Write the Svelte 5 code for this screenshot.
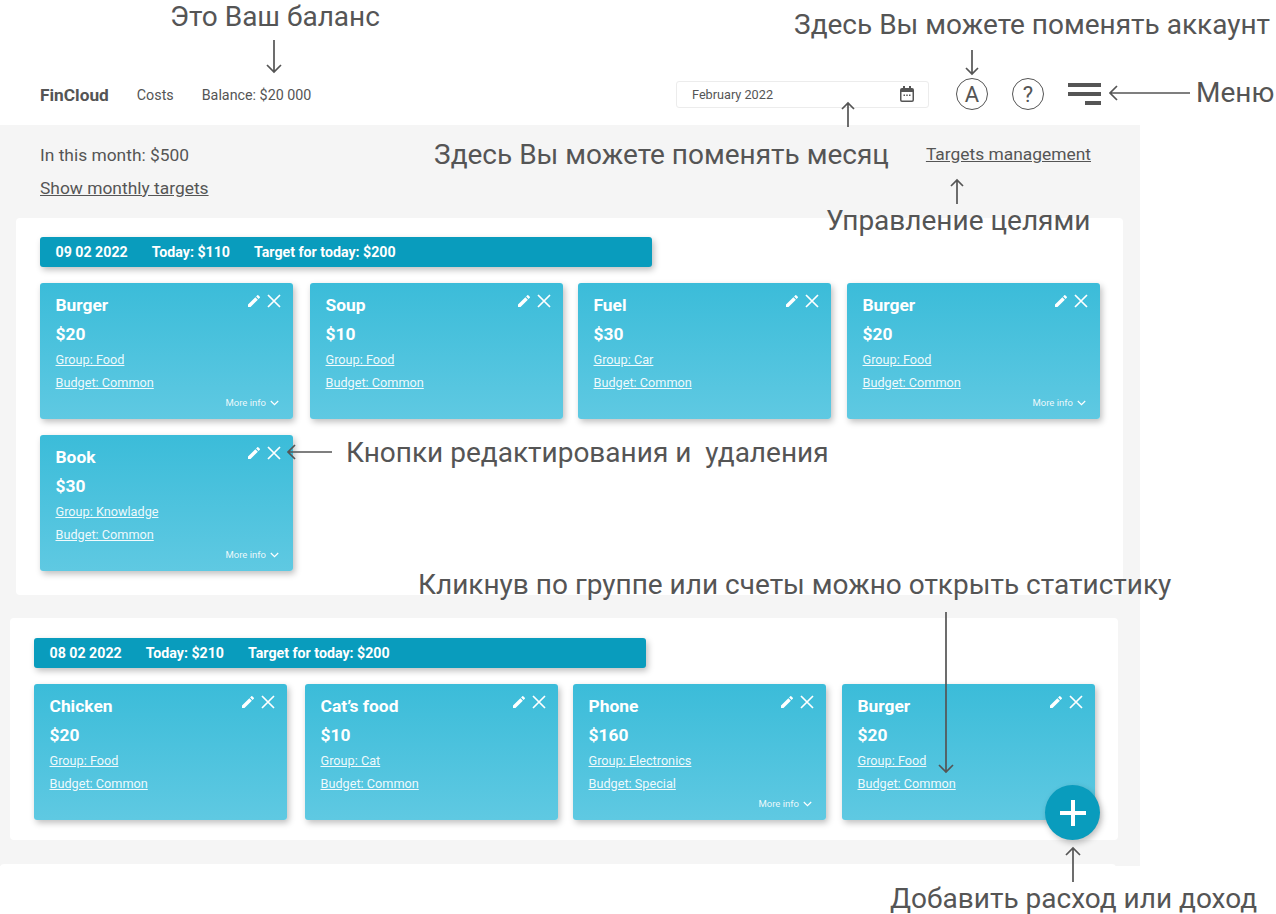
<script>
  const days = [
    {
      date: '09 02 2022', today: '$110', target: '$200', cls: 'first',
      items: [
        { name: 'Burger', price: '$20', group: 'Food', budget: 'Common', more: true },
        { name: 'Soup', price: '$10', group: 'Food', budget: 'Common' },
        { name: 'Fuel', price: '$30', group: 'Car', budget: 'Common' },
        { name: 'Burger', price: '$20', group: 'Food', budget: 'Common', more: true },
        { name: 'Book', price: '$30', group: 'Knowladge', budget: 'Common', more: true }
      ]
    },
    {
      date: '08 02 2022', today: '$210', target: '$200', cls: 'second',
      items: [
        { name: 'Chicken', price: '$20', group: 'Food', budget: 'Common' },
        { name: 'Cat’s food', price: '$10', group: 'Cat', budget: 'Common' },
        { name: 'Phone', price: '$160', group: 'Electronics', budget: 'Special', more: true },
        { name: 'Burger', price: '$20', group: 'Food', budget: 'Common' }
      ]
    }
  ];

  // help overlay drawn over the screen
  const notes = [
    { text: 'Это Ваш баланс', x: 170, y: 17 },
    { text: 'Здесь Вы можете поменять аккаунт', x: 794, y: 25 },
    { text: 'Меню', x: 1196, y: 93 },
    { text: 'Здесь Вы можете поменять месяц', x: 434, y: 155 },
    { text: 'Управление целями', x: 826, y: 221 },
    { text: 'Кнопки редактирования и  удаления', x: 346, y: 453 },
    { text: 'Кликнув по группе или счеты можно открыть статистику', x: 418, y: 585 },
    { text: 'Добавить расход или доход', x: 890, y: 899 }
  ];
</script>

<div class="page">
  <header class="topbar">
    <span class="logo">FinCloud</span>
    <span class="nav">Costs</span>
    <span class="nav">Balance: $20 000</span>
    <div class="tools">
      <div class="month">
        <span>February 2022</span>
        <svg width="14" height="16" viewBox="0 0 14 16">
          <path fill="#555" d="M2 2h1V0h2v2h4V0h2v2h1a2 2 0 0 1 2 2v10a2 2 0 0 1-2 2H2a2 2 0 0 1-2-2V4a2 2 0 0 1 2-2zM1.500 6v8c0 .3.2.5.5.5h10c.3 0 .5-.2.5-.5V6z"/>
          <path fill="#555" d="M3.500 8.500h1.500V10H3.500zM6.250 8.500h1.500V10h-1.500zM9 8.500h1.500V10H9z"/>
        </svg>
      </div>
      <span class="round">A</span>
      <span class="round">?</span>
      <div class="burger"><i></i><i></i><i class="short"></i></div>
    </div>
  </header>

  <main class="content">
    <div class="summary">
      <div>
        <p>In this month: $500</p>
        <a href="#targets">Show monthly targets</a>
      </div>
      <a class="manage" href="#manage">Targets management</a>
    </div>

    {#each days as day}
      <section class="day {day.cls}">
        <div class="daybar">
          <span>{day.date}</span>
          <span>Today: {day.today}</span>
          <span>Target for today: {day.target}</span>
        </div>
        <div class="cards">
          {#each day.items as item}
            <article class="card">
              <div class="actions">
                <svg width="16" height="16" viewBox="0 0 24 24"><path fill="#fff" d="M3 17.250V21h3.750L17.810 9.940l-3.750-3.750L3 17.250zM20.710 7.040a1 1 0 0 0 0-1.410l-2.340-2.340a1 1 0 0 0-1.410 0l-1.830 1.830 3.750 3.750 1.830-1.830z"/></svg>
                <svg width="14" height="14" viewBox="0 0 14 14"><path stroke="#fff" stroke-width="1.700" d="M1 1l12 12M13 1L1 13"/></svg>
              </div>
              <h3>{item.name}</h3>
              <div class="price">{item.price}</div>
              <a href="#group">Group: {item.group}</a>
              <a href="#budget">Budget: {item.budget}</a>
              {#if item.more}
                <div class="more">
                  More info
                  <svg width="9" height="6" viewBox="0 0 9 6"><path fill="none" stroke="#fff" stroke-width="1.200" d="M.8 1l3.700 3.700L8.200 1"/></svg>
                </div>
              {/if}
            </article>
          {/each}
        </div>
      </section>
    {/each}
    <section class="day third"></section>
  </main>

  <button class="fab" aria-label="Add">
    <svg width="26" height="26" viewBox="0 0 26 26"><path stroke="#fff" stroke-width="4" d="M13 0v26M0 13h26"/></svg>
  </button>

  {#each notes as note}
    <span class="note" style="left: {note.x}px; top: {note.y}px">{note.text}</span>
  {/each}

  <svg class="arrows" width="1276" height="914" fill="none" stroke="#555" stroke-width="1.700">
    <path d="M274 40v32M267 65l7 7 7-7" />
    <path d="M972 50v24M966 68l6 6 6-6" />
    <path d="M1190 93h-80M1117 86l-7 7 7 7" />
    <path d="M848 127v-24M842 109l6-6 6 6" />
    <path d="M957 204v-24M951 186l6-6 6 6" />
    <path d="M332 452h-44M295 445l-7 7 7 7" />
    <path d="M946 612v160M939 765l7 7 7-7" />
    <path d="M1073 882v-34M1066 855l7-7 7 7" />
  </svg>
</div>

<style>
  :global(body) {
    background: #fff;
  }

  .page {
    position: relative;
    width: 1276px;
    height: 914px;
    overflow: hidden;
    font-family: Roboto, sans-serif;
    color: #555;
  }

  .topbar {
    display: flex;
    align-items: center;
    height: 125px;
    padding: 64px 175px 0 40px;
    box-sizing: border-box;
    font-size: 14.300px;
    gap: 28px;
  }

  .logo {
    font-size: 17.300px;
    font-weight: 700;
  }

  .tools {
    display: flex;
    align-items: center;
    gap: 24px;
    margin-left: auto;
    margin-top: -1px;
  }

  .month {
    display: flex;
    align-items: center;
    justify-content: space-between;
    box-sizing: border-box;
    width: 253px;
    height: 27px;
    margin-right: 3px;
    padding: 0 14px 0 15px;
    border: 1px solid #ececec;
    border-radius: 3px;
    font-size: 12.700px;
  }

  .round {
    display: flex;
    align-items: center;
    justify-content: center;
    box-sizing: border-box;
    width: 32px;
    height: 32px;
    border: 1.500px solid #555;
    border-radius: 50%;
    font-size: 22px;
  }

  .burger {
    display: flex;
    flex-direction: column;
    align-items: flex-end;
    gap: 5px;
    width: 33px;
  }

  .burger i {
    display: block;
    width: 100%;
    height: 4px;
    background: #555;
  }

  .burger .short {
    width: 50%;
  }

  .content {
    width: 1140px;
    height: 741px;
    overflow: hidden;
    background: #f5f5f5;
  }

  .summary {
    display: flex;
    justify-content: space-between;
    height: 93px;
    padding: 20px 49px 0 40px;
    box-sizing: border-box;
    font-size: 17.400px;
  }

  .summary p {
    margin: 0 0 13px;
  }

  .summary a {
    color: #555;
  }

  .manage {
    margin-top: -1px;
  }

  .day {
    box-sizing: border-box;
    padding: 19px 24px 24px;
    border-radius: 4px;
    background: #fff;
  }

  .first {
    width: 1107px;
    margin: 0 0 23px 16px;
  }

  .second {
    width: 1108px;
    margin: 0 0 24px 10px;
    padding-top: 20px;
    padding-bottom: 20px;
  }

  .third {
    width: 1116px;
    height: 20px;
  }

  .daybar {
    display: flex;
    align-items: center;
    gap: 24px;
    box-sizing: border-box;
    width: 612px;
    height: 30px;
    padding-left: 15.500px;
    border-radius: 3px;
    background: #099cbd;
    box-shadow: 2px 3px 6px rgba(0, 0, 0, 0.25);
    color: #fff;
    font-size: 14.200px;
    font-weight: 700;
  }

  .cards {
    display: grid;
    grid-template-columns: 270px 268px 269px 253px;
    row-gap: 16px;
    margin-top: 16px;
  }

  .second .cards {
    grid-template-columns: 271px 268px 269px 253px;
  }

  .card {
    position: relative;
    box-sizing: border-box;
    width: 253px;
    height: 136px;
    padding: 11px 16px 0 15.500px;
    border-radius: 3px;
    background: linear-gradient(#3bbcd9, #5fc9e2);
    box-shadow: 2px 3px 6px rgba(0, 0, 0, 0.25);
    color: #fff;
  }

  .card h3 {
    margin: 0;
    font-size: 17.400px;
    font-weight: 700;
    line-height: 22px;
  }

  .price {
    margin: 7px 0 7px;
    font-size: 17.400px;
    font-weight: 700;
    line-height: 22px;
  }

  .card a {
    display: table;
    margin-bottom: 8px;
    color: rgba(255, 255, 255, 0.92);
    font-size: 12.700px;
    line-height: 15px;
  }

  .actions {
    position: absolute;
    top: 10px;
    right: 12px;
    display: flex;
    align-items: center;
    gap: 5px;
  }

  .more {
    position: absolute;
    right: 14px;
    bottom: 11px;
    display: flex;
    align-items: center;
    gap: 4px;
    color: rgba(255, 255, 255, 0.9);
    font-size: 9.500px;
  }

  .fab {
    position: absolute;
    left: 1045px;
    top: 785px;
    display: flex;
    align-items: center;
    justify-content: center;
    width: 55px;
    height: 55px;
    padding: 0;
    border: none;
    border-radius: 50%;
    background: #099cbd;
    box-shadow: 2px 3px 6px rgba(0, 0, 0, 0.25);
  }

  .note {
    position: absolute;
    transform: translateY(-50%);
    font-size: 28px;
    line-height: 34px;
    white-space: pre;
  }

  .arrows {
    position: absolute;
    left: 0;
    top: 0;
    pointer-events: none;
  }
</style>
